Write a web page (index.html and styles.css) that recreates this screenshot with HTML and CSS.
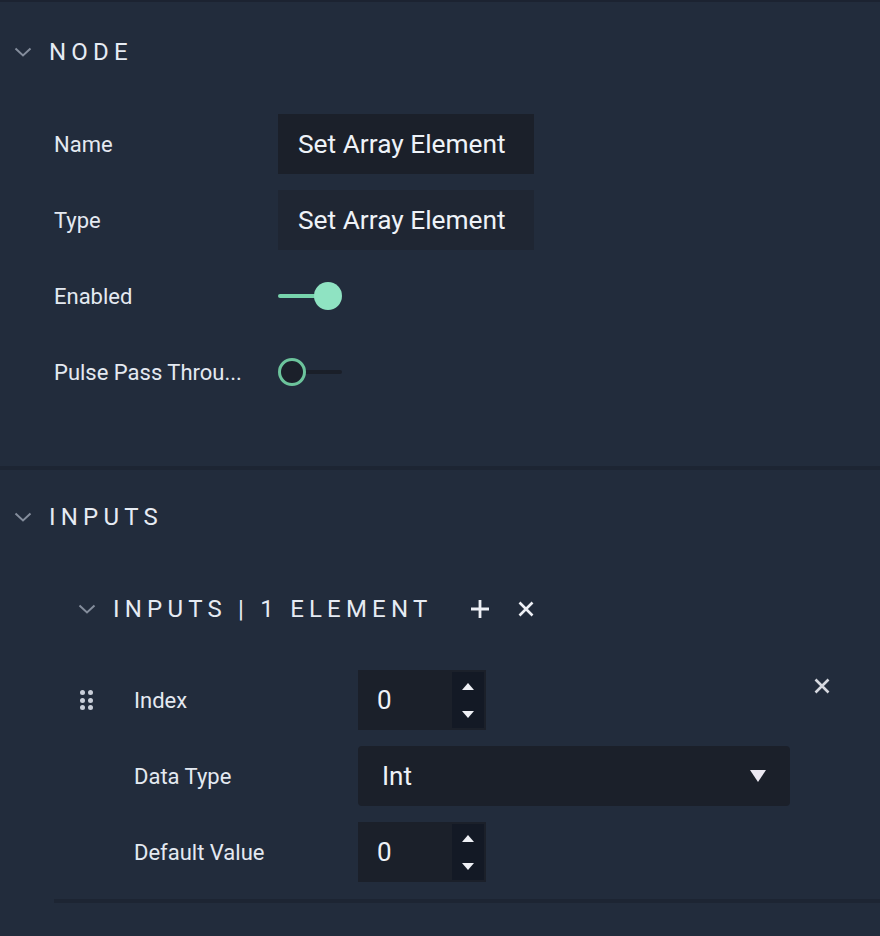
FILE: index.html
```html
<!DOCTYPE html>
<html>
<head>
<meta charset="utf-8">
<link rel="stylesheet" href="styles.css">
</head>
<body>
<div class="panel">
  <section class="section node">
    <div class="section-header">
      <svg class="chev" viewBox="0 0 18 10" width="18" height="10"><path d="M1.5 1.5 L9 8.5 L16.5 1.5" fill="none" stroke="#848d9c" stroke-width="2"/></svg>
      <span class="section-title">NODE</span>
    </div>
    <div class="rows">
      <div class="row">
        <div class="label">Name</div>
        <div class="text-input">Set Array Element</div>
      </div>
      <div class="row">
        <div class="label">Type</div>
        <div class="text-input disabled">Set Array Element</div>
      </div>
      <div class="row">
        <div class="label">Enabled</div>
        <div class="toggle on"><span class="track"></span><span class="thumb"></span></div>
      </div>
      <div class="row">
        <div class="label">Pulse Pass Throu...</div>
        <div class="toggle off"><span class="track"></span><span class="thumb"></span></div>
      </div>
    </div>
  </section>
  <div class="divider"></div>
  <section class="section inputs">
    <div class="section-header">
      <svg class="chev" viewBox="0 0 18 10" width="18" height="10"><path d="M1.5 1.5 L9 8.5 L16.5 1.5" fill="none" stroke="#848d9c" stroke-width="2"/></svg>
      <span class="section-title">INPUTS</span>
    </div>
    <div class="subsection">
      <div class="sub-header">
        <svg class="chev" viewBox="0 0 18 10" width="18" height="10"><path d="M1.5 1.5 L9 8.5 L16.5 1.5" fill="none" stroke="#848d9c" stroke-width="2"/></svg>
        <span class="section-title">INPUTS | 1 ELEMENT</span>
        <svg class="icon-plus" viewBox="0 0 20 20" width="20" height="20"><path d="M10 1 V19 M1 10 H19" stroke="#eef0f5" stroke-width="2.8"/></svg>
        <svg class="icon-x" viewBox="0 0 16 16" width="16" height="16"><path d="M1.5 1.5 L14.5 14.5 M14.5 1.5 L1.5 14.5" stroke="#eef0f5" stroke-width="2.6"/></svg>
      </div>
      <div class="element">
        <div class="handle">
          <span></span><span></span><span></span><span></span><span></span><span></span>
        </div>
        <div class="element-rows">
          <div class="row">
            <div class="label">Index</div>
            <div class="num-input">
              <span class="num-value">0</span>
              <span class="spinner">
                <svg viewBox="0 0 12 7" width="12" height="7"><path d="M0 7 L6 0 L12 7 Z" fill="#eef0f5"/></svg>
                <svg viewBox="0 0 12 7" width="12" height="7"><path d="M0 0 L12 0 L6 7 Z" fill="#eef0f5"/></svg>
              </span>
            </div>
          </div>
          <div class="row">
            <div class="label">Data Type</div>
            <div class="select">
              <span>Int</span>
              <svg viewBox="0 0 16 12" width="16" height="12"><path d="M0 0 H16 L8 12 Z" fill="#ece9f2"/></svg>
            </div>
          </div>
          <div class="row">
            <div class="label">Default Value</div>
            <div class="num-input">
              <span class="num-value">0</span>
              <span class="spinner">
                <svg viewBox="0 0 12 7" width="12" height="7"><path d="M0 7 L6 0 L12 7 Z" fill="#eef0f5"/></svg>
                <svg viewBox="0 0 12 7" width="12" height="7"><path d="M0 0 L12 0 L6 7 Z" fill="#eef0f5"/></svg>
              </span>
            </div>
          </div>
        </div>
        <svg class="remove" viewBox="0 0 16 16" width="16" height="16"><path d="M1.5 1.5 L14.5 14.5 M14.5 1.5 L1.5 14.5" stroke="#d6d8df" stroke-width="2.6"/></svg>
      </div>
      <div class="sub-divider"></div>
    </div>
  </section>
</div>
</body>
</html>
```

FILE: styles.css
```css
* { box-sizing: border-box; }
html, body {
  margin: 0;
  padding: 0;
  background: #222c3c;
}
body {
  font-family: Roboto, "Noto Sans", "Liberation Sans", sans-serif;
  color: #e4e9f1;
  width: 880px;
  height: 936px;
  overflow: hidden;
}
.panel {
  border-top: 2px solid #1c2331;
  display: flex;
  flex-direction: column;
}
.section-header {
  display: flex;
  align-items: center;
  height: 40px;
  padding-left: 14px;
  gap: 17px;
}
.node .section-header { margin-top: 30px; }
.inputs .section-header { margin-top: 27px; }
.section-title {
  font-size: 24px;
  letter-spacing: 5.2px;
  color: #e6ebf3;
  line-height: 1;
}
.chev { flex: none; }
.rows {
  display: flex;
  flex-direction: column;
  margin-top: 34px;
  padding-left: 54px;
  padding-bottom: 56px;
}
.row {
  display: flex;
  align-items: center;
  height: 76px;
}
.label {
  width: 224px;
  flex: none;
  font-size: 22px;
  color: #e4e9f1;
  white-space: nowrap;
}
.text-input {
  width: 256px;
  height: 60px;
  background: #1b202a;
  display: flex;
  align-items: center;
  padding-left: 20px;
  font-size: 26.3px;
  color: #eef2f8;
}
.text-input.disabled {
  background: #1f2633;
}
.toggle {
  position: relative;
  width: 64px;
  height: 28px;
}
.toggle .track {
  position: absolute;
  left: 0;
  top: 12px;
  height: 4px;
  border-radius: 2px;
}
.toggle.on .track { width: 50px; background: #77d3ac; }
.toggle.off .track { width: 64px; background: #1a1f29; }
.toggle .thumb {
  position: absolute;
  top: 0;
  width: 28px;
  height: 28px;
  border-radius: 50%;
}
.toggle.on .thumb { right: 0; background: #8fe3c2; }
.toggle.off .thumb { left: 0; background: #1b202a; border: 3px solid #6cc49c; }
.divider {
  height: 4px;
  background: #1d2533;
}
.subsection {
  margin-left: 54px;
  display: flex;
  flex-direction: column;
}
.sub-header {
  display: flex;
  align-items: center;
  height: 40px;
  margin-top: 52px;
  padding-left: 24px;
  gap: 17px;
}
.icon-plus { margin-left: 21px; }
.icon-x { margin-left: 11px; }
.element {
  position: relative;
  display: flex;
  margin-top: 33px;
}
.handle {
  flex: none;
  width: 13px;
  height: 20px;
  margin-left: 26px;
  margin-top: 28px;
  display: grid;
  grid-template-columns: 5px 5px;
  grid-template-rows: 5px 5px 5px;
  column-gap: 3px;
  row-gap: 2.5px;
}
.handle span {
  width: 5px;
  height: 5px;
  border-radius: 50%;
  background: #c9ced8;
}
.element-rows {
  display: flex;
  flex-direction: column;
  margin-left: 41px;
}
.num-input {
  width: 128px;
  height: 60px;
  background: #1b202a;
  display: flex;
  align-items: center;
  justify-content: space-between;
  padding: 2px 2px 2px 19px;
}
.num-value {
  font-size: 26px;
  color: #eef2f8;
}
.spinner {
  width: 32px;
  height: 56px;
  background: #131925;
  display: flex;
  flex-direction: column;
  align-items: center;
  justify-content: center;
  gap: 21px;
}
.select {
  width: 432px;
  height: 60px;
  background: #1b202a;
  border-radius: 4px;
  display: flex;
  align-items: center;
  justify-content: space-between;
  padding: 0 24px 0 24px;
  font-size: 26px;
  color: #eef2f8;
}
.remove {
  position: absolute;
  left: 760px;
  top: 16px;
}
.sub-divider {
  height: 4px;
  background: #1d2533;
  margin-top: 9px;
}
```
